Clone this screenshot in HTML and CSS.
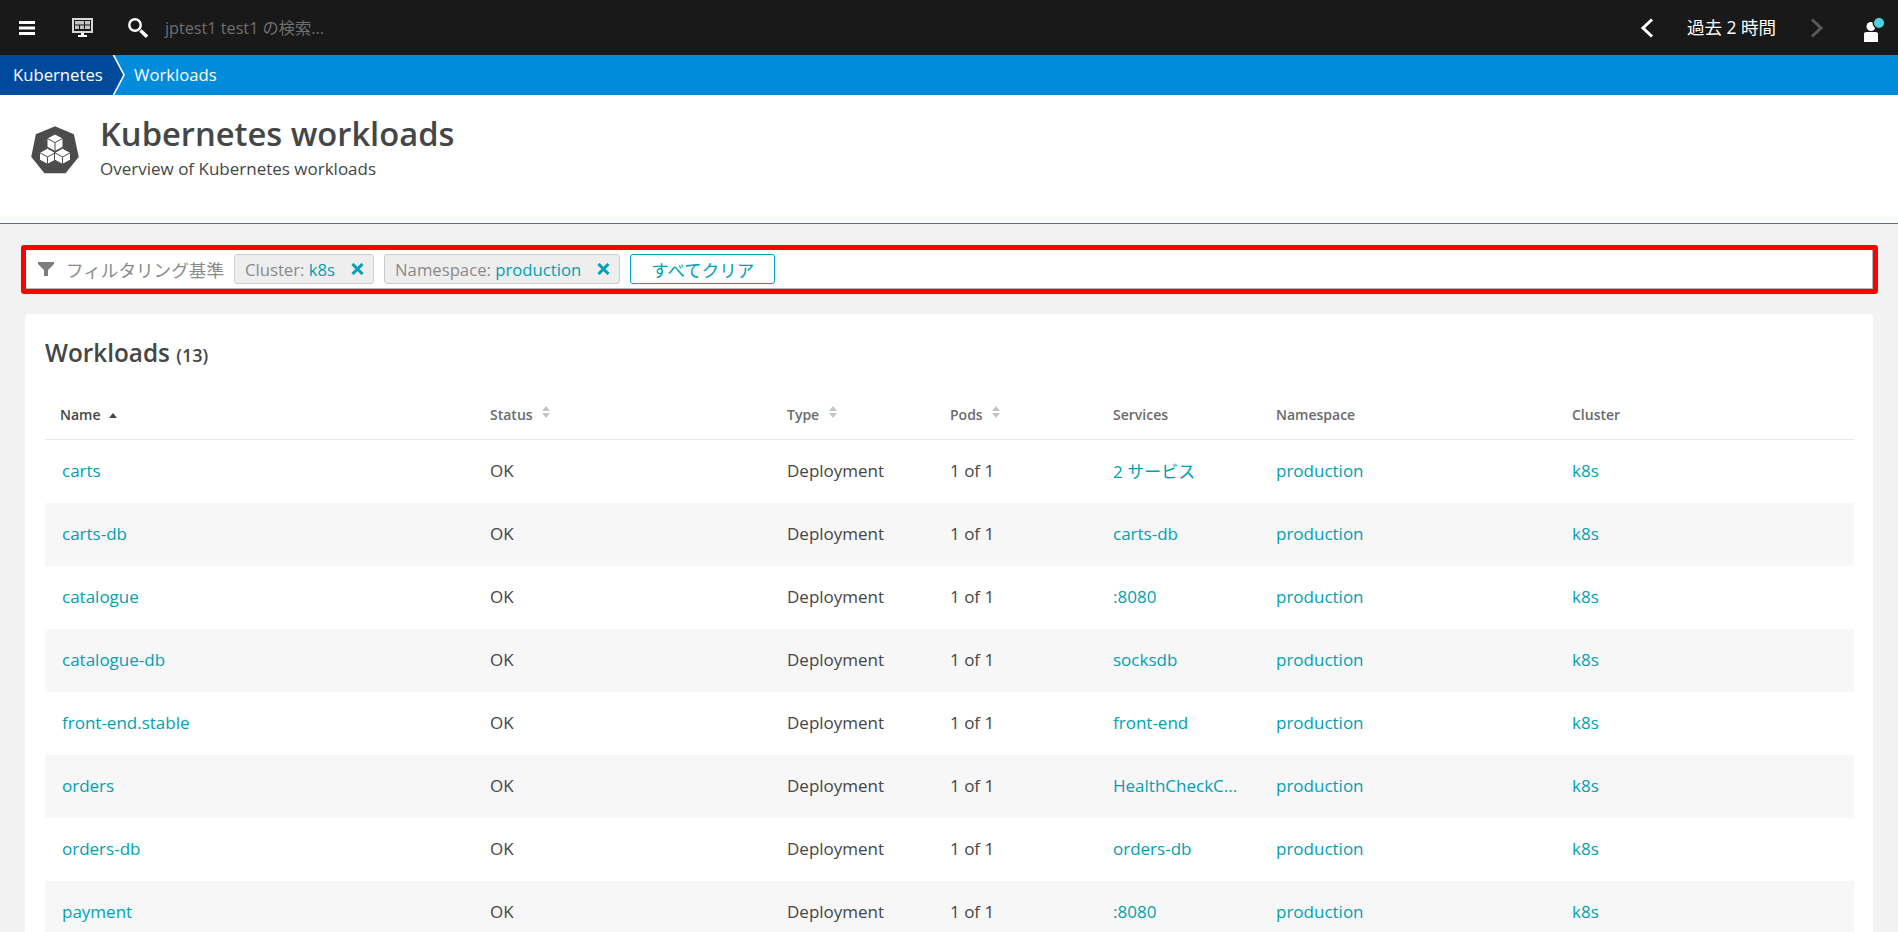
FILE: index.html
```html
<!DOCTYPE html>
<html lang="en">
<head>
  <meta charset="UTF-8" />
  <title>Kubernetes workloads</title>
  <link rel="stylesheet" href="styles.css">
</head>
<body>
  <div class="topbar">
    <svg class="menu-icon" width="16" height="14" viewBox="0 0 16 14"><path d="M0 0h16v3H0zM0 5.500h16v3H0zM0 11h16v3H0z" fill="#fff"/></svg>
    <svg class="screen-icon" width="21" height="19" viewBox="0 0 21 19"><path d="M0 0h21v15H0z" fill="#d8d8d8"/><path d="M2 2h17v11H2z" fill="#191919"/><path d="M3 3h9v3.500H3zM13 3h5v3.500h-5zM3 7.500h4V11H3zM8 7.500h4V11H8zM13 7.500h5V11h-5z" fill="#c4c4c4"/><path d="M9 15h3v2h3v2H6v-2h3z" fill="#fff"/></svg>
    <svg class="search-icon" width="20" height="20" viewBox="0 0 20 20"><circle cx="7" cy="7" r="5.700" fill="none" stroke="#fff" stroke-width="2.400"/><path d="M12.500 12.500l6.500 6.200" stroke="#fff" stroke-width="3.400"/></svg>
    <span class="search-text">jptest1 test1 の検索...</span>
    <div class="topbar-right">
      <svg width="14" height="20" viewBox="0 0 14 20"><path d="M12 1.500L3 10l9 8.500" fill="none" stroke="#fff" stroke-width="3"/></svg>
      <span class="timeframe">過去 2 時間</span>
      <svg class="next" width="14" height="20" viewBox="0 0 14 20"><path d="M2 1.500l9 8.500-9 8.500" fill="none" stroke="#5a5a5a" stroke-width="3"/></svg>
      <svg class="user-icon" width="20" height="24" viewBox="0 0 20 24">
        <circle cx="7" cy="8.500" r="4.500" fill="#fff"/>
        <path d="M2 14h10l2 1v9H0v-9z" fill="#fff"/>
        <circle cx="15" cy="5" r="5.800" fill="#4fd0dd" stroke="#191919" stroke-width="1.400"/>
      </svg>
    </div>
  </div>

  <div class="breadcrumbs">
    <div class="crumb-first">Kubernetes</div>
    <svg class="crumb-arrow" width="13" height="40" viewBox="0 0 13 40"><path d="M0 0h1l11 20L1 40H0z" fill="#004a9c"/><path d="M1 -1l11 21L1 41" fill="none" stroke="#fff" stroke-width="1.600"/></svg>
    <div class="crumb">Workloads</div>
  </div>

  <div class="page-header">
    <svg class="page-icon" width="60" height="60" viewBox="0 0 60 60">
      <path d="M30 7.300L48 15l4.700 21.700L40 52.300H20L7.300 36.700 11.700 15z" fill="#4c4c4c" stroke="#4c4c4c" stroke-width="2" stroke-linejoin="round"/>
      <g fill="#fff" stroke="#4c4c4c" stroke-width="1">
        <path d="M30 14l8 4.300v8.700l-8 4.300-8-4.300v-8.700z"/>
        <path d="M22.500 28.300l8 4.300v7.400l-8 4.300-8-4.300v-7.400z"/>
        <path d="M37.500 28.300l8 4.300v7.400l-8 4.300-8-4.300v-7.400z"/>
        <path d="M22 18.300l8 4.300 8-4.300M30 22.600V31M14.500 32.600l8 4.300 8-4.300M22.500 36.900v7.400M29.500 32.600l8 4.300 8-4.300M37.500 36.900v7.400" fill="none"/>
      </g>
    </svg>
    <div>
      <h1>Kubernetes workloads</h1>
      <p>Overview of Kubernetes workloads</p>
    </div>
  </div>

  <div class="content">
    <div class="filter-bar">
      <svg class="filter-icon" width="16" height="14" viewBox="0 0 16 14"><path d="M0 0h16v2l-6 6v6H6V8L0 2z" fill="#7d7d7d"/></svg>
      <span class="filter-label">フィルタリング基準</span>
      <span class="tag">Cluster:&nbsp;<b>k8s</b><svg width="13" height="12" viewBox="0 0 13 12"><path d="M1.500 1l10 10M11.500 1l-10 10" stroke="#00a1b2" stroke-width="3"/></svg></span>
      <span class="tag">Namespace:&nbsp;<b>production</b><svg width="13" height="12" viewBox="0 0 13 12"><path d="M1.500 1l10 10M11.500 1l-10 10" stroke="#00a1b2" stroke-width="3"/></svg></span>
      <button class="clear-btn">すべてクリア</button>
    </div>

    <div class="card">
      <h2>Workloads <small>(13)</small></h2>
      <div class="row head">
        <div class="name">Name <span class="sort-up"></span></div>
        <div class="status">Status <span class="sort"></span></div>
        <div class="type">Type <span class="sort"></span></div>
        <div class="pods">Pods <span class="sort"></span></div>
        <div class="services">Services</div>
        <div class="ns">Namespace</div>
        <div class="cluster">Cluster</div>
      </div>
      <div class="row">
        <div class="name"><a>carts</a></div><div class="status">OK</div><div class="type">Deployment</div><div class="pods">1 of 1</div>
        <div class="services"><a>2 サービス</a></div><div class="ns"><a>production</a></div><div class="cluster"><a>k8s</a></div>
      </div>
      <div class="row">
        <div class="name"><a>carts-db</a></div><div class="status">OK</div><div class="type">Deployment</div><div class="pods">1 of 1</div>
        <div class="services"><a>carts-db</a></div><div class="ns"><a>production</a></div><div class="cluster"><a>k8s</a></div>
      </div>
      <div class="row">
        <div class="name"><a>catalogue</a></div><div class="status">OK</div><div class="type">Deployment</div><div class="pods">1 of 1</div>
        <div class="services"><a>:8080</a></div><div class="ns"><a>production</a></div><div class="cluster"><a>k8s</a></div>
      </div>
      <div class="row">
        <div class="name"><a>catalogue-db</a></div><div class="status">OK</div><div class="type">Deployment</div><div class="pods">1 of 1</div>
        <div class="services"><a>socksdb</a></div><div class="ns"><a>production</a></div><div class="cluster"><a>k8s</a></div>
      </div>
      <div class="row">
        <div class="name"><a>front-end.stable</a></div><div class="status">OK</div><div class="type">Deployment</div><div class="pods">1 of 1</div>
        <div class="services"><a>front-end</a></div><div class="ns"><a>production</a></div><div class="cluster"><a>k8s</a></div>
      </div>
      <div class="row">
        <div class="name"><a>orders</a></div><div class="status">OK</div><div class="type">Deployment</div><div class="pods">1 of 1</div>
        <div class="services"><a>HealthCheckC...</a></div><div class="ns"><a>production</a></div><div class="cluster"><a>k8s</a></div>
      </div>
      <div class="row">
        <div class="name"><a>orders-db</a></div><div class="status">OK</div><div class="type">Deployment</div><div class="pods">1 of 1</div>
        <div class="services"><a>orders-db</a></div><div class="ns"><a>production</a></div><div class="cluster"><a>k8s</a></div>
      </div>
      <div class="row">
        <div class="name"><a>payment</a></div><div class="status">OK</div><div class="type">Deployment</div><div class="pods">1 of 1</div>
        <div class="services"><a>:8080</a></div><div class="ns"><a>production</a></div><div class="cluster"><a>k8s</a></div>
      </div>
    </div>
  </div>
</body>
</html>
```

FILE: styles.css
```css
html, body {
  height: 100%;
  overflow: hidden;
}
body {
  margin: 0;
  background: #f2f2f2;
  color: #454646;
  font-family: "Open Sans", "Noto Sans CJK JP", sans-serif;
  font-size: 17px;
}
.topbar {
  height: 55px;
  background: #191919;
  display: flex;
  align-items: center;
  padding-left: 19px;
}
.menu-icon {
  margin-right: 37px;
}
.screen-icon {
  margin-right: 35px;
}
.search-text {
  margin: 0 0 2px 17px;
  color: #6f6f6f;
  font-size: 16.2px;
}
.topbar-right {
  margin-left: auto;
  display: flex;
  align-items: center;
  color: #fff;
  padding-right: 14px;
}
.timeframe {
  margin: 0 34px 2px 33px;
  font-size: 17.5px;
}
.user-icon {
  margin: 4px 0 0 40px;
}
.breadcrumbs {
  height: 40px;
  background: #008cdb;
  display: flex;
  align-items: center;
  color: #fff;
  font-size: 16.7px;
}
.crumb-first {
  height: 40px;
  line-height: 40px;
  background: #004a9c;
  padding-left: 13px;
  width: 99px;
}
.crumb-arrow + .crumb {
  margin: 0 0 1px 9px;
}
.page-header {
  height: 129px;
  box-sizing: border-box;
  background: #fff;
  border-bottom: 1px solid #008cdb;
  display: flex;
  padding-left: 25px;
}
.page-icon {
  margin-top: 25px;
  margin-right: 15px;
}
h1 {
  margin: 19px 0 0;
  font-size: 32.7px;
  font-weight: 600;
  line-height: 40px;
}
.page-header p {
  margin: 4px 0 0;
  line-height: 22px;
}
.content {
  padding: 21px 20px 0 21px;
}
.filter-bar {
  height: 49px;
  box-sizing: border-box;
  border: 5px solid #ff0000;
  border-radius: 3px;
  box-shadow: inset -1px -1px 0 #b5b5b5;
  display: flex;
  align-items: center;
  background: #fff;
  padding: 0 0 1px 12px;
}
.filter-label {
  margin-left: 12px;
  color: #8a8a8a;
  font-size: 17.6px;
}
.tag {
  margin-left: 10px;
  height: 30px;
  box-sizing: border-box;
  padding: 0 9px 0 10px;
  border: 1px solid #cccccc;
  border-radius: 3px;
  background: #eeeeee;
  color: #8a8a8a;
  font-size: 16.7px;
  display: flex;
  align-items: center;
}
.tag b {
  font-weight: 400;
  color: #00a1b2;
}
.tag svg {
  margin-left: 16px;
}
.clear-btn {
  margin-left: 10px;
  width: 145px;
  height: 30px;
  padding: 0;
  border: 1px solid #00a1b2;
  border-radius: 3px;
  background: #fff;
  color: #00a1b2;
  font-family: inherit;
  font-size: 17.5px;
}
.card {
  margin: 20px 5px 0 4px;
  background: #fff;
  border-radius: 3px;
  padding: 0 19px 0 20px;
}
h2 {
  margin: 0;
  padding-top: 23px;
  height: 75px;
  box-sizing: border-box;
  font-size: 24.3px;
  font-weight: 600;
  line-height: 32px;
}
h2 small {
  font-size: 18px;
}
.row {
  display: flex;
  height: 63px;
  box-sizing: border-box;
  padding-bottom: 2px;
  align-items: center;
}
.row:nth-child(even) {
  background: #f7f7f7;
}
.row.head {
  height: 51px;
  padding-bottom: 0;
  background: #fff;
  border-bottom: 1px solid #e6e6e6;
  font-size: 14px;
  font-weight: 600;
  color: #6b6b6b;
}
.row.head .name {
  color: #454646;
  padding-left: 15px;
}
.row a {
  color: #00a1b2;
}
.name {
  width: 445px;
  box-sizing: border-box;
  padding-left: 17px;
}
.status {
  width: 297px;
}
.type {
  width: 163px;
}
.pods {
  width: 163px;
}
.services {
  width: 163px;
}
.ns {
  width: 296px;
}
.cluster {
  flex: 1;
}
.sort, .sort-up {
  display: inline-block;
  margin-left: 6px;
  vertical-align: middle;
}
.sort-up {
  margin-left: 5px;
  width: 0;
  height: 0;
  border: 4px solid transparent;
  border-top: 0;
  border-bottom: 5px solid #454646;
}
.sort {
  width: 0;
  height: 0;
  border: 4px solid transparent;
  border-top: 5px solid #c4c4c4;
  border-bottom: 0;
  position: relative;
}
.sort::before {
  content: "";
  position: absolute;
  left: -4px;
  top: -12px;
  border: 4px solid transparent;
  border-top: 0;
  border-bottom: 5px solid #c4c4c4;
}
```
